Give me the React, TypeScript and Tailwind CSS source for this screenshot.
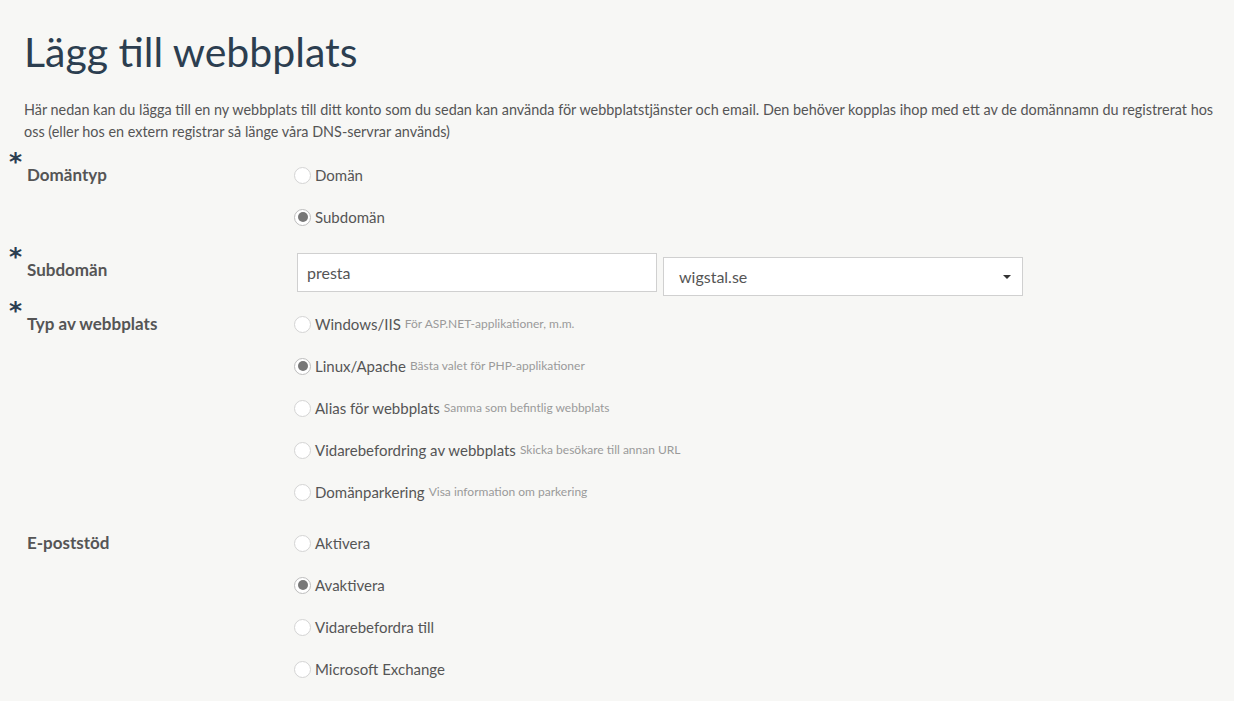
import React from "react";

const font = { fontFamily: '"Lato", "Open Sans", sans-serif' };

function Radio({ checked, label, hint }: { checked?: boolean; label: string; hint?: string }) {
  return (
    <div className="flex h-[42px] items-center">
      <span
        className={
          checked
            ? "flex h-[17px] w-[17px] shrink-0 items-center justify-center rounded-full border border-[#bdbdbd] bg-white"
            : "flex h-[17px] w-[17px] shrink-0 items-center justify-center rounded-full border border-[#d4d4d4] bg-white"
        }
      >
        {checked && <span className="h-[10px] w-[10px] rounded-full bg-[#777]" />}
      </span>
      <span className="ml-[4px] text-[15px] text-[#555]">{label}</span>
      {hint && <span className="ml-[4px] text-[12px] text-[#9a9a9a]">{hint}</span>}
    </div>
  );
}

function Label({ text, required }: { text: string; required?: boolean }) {
  return (
    <div className="relative w-[270px] shrink-0 pl-[3px]">
      {required && (
        <span
          className="absolute left-[-15px] top-[-13px] text-[25px] font-bold leading-none text-[#2c3e50]"
          style={{ fontFamily: '"DejaVu Sans", sans-serif' }}
        >
          *
        </span>
      )}
      <span className="text-[17px] font-bold text-[#555]">{text}</span>
    </div>
  );
}

export default function App() {
  return (
    <div className="min-h-[701px] bg-[#f7f7f5] pl-[24px] pr-[16px]" style={font}>
      <h1 className="pt-[24px] text-[41px] leading-[56px] text-[#2c3e50]">Lägg till webbplats</h1>
      <p className="mt-[19px] text-[14.4px] leading-[22px] text-[#555]">
        Här nedan kan du lägga till en ny webbplats till ditt konto som du sedan kan använda för webbplatstjänster och email. Den behöver kopplas ihop med ett av de domännamn du registrerat hos oss (eller hos en extern registrar så länge våra DNS-servrar används)
      </p>

      <div className="mt-[11px] flex">
        <div className="flex h-[42px] items-center">
          <Label text="Domäntyp" required />
        </div>
        <div>
          <Radio label="Domän" />
          <Radio label="Subdomän" checked />
        </div>
      </div>

      <div className="mt-[15px] flex">
        <div className="flex h-[39px] items-center pb-[6px]">
          <Label text="Subdomän" required />
        </div>
        <div className="ml-[3px] flex gap-[6px]">
          <div className="flex h-[39px] w-[360px] items-center border border-[#d0d0d0] bg-white pl-[9px] text-[16px] text-[#555]">
            presta
          </div>
          <div className="mt-[4px] flex h-[39px] w-[360px] items-center justify-between border border-[#d0d0d0] bg-white pl-[15px] pr-[11px] text-[16px] text-[#555]">
            <span>wigstal.se</span>
            <span className="h-0 w-0 border-x-[4px] border-t-[4px] border-x-transparent border-t-[#333]" />
          </div>
        </div>
      </div>

      <div className="mt-[7px] flex">
        <div className="flex h-[42px] items-center">
          <Label text="Typ av webbplats" required />
        </div>
        <div>
          <Radio label="Windows/IIS" hint="För ASP.NET-applikationer, m.m." />
          <Radio label="Linux/Apache" hint="Bästa valet för PHP-applikationer" checked />
          <Radio label="Alias för webbplats" hint="Samma som befintlig webbplats" />
          <Radio label="Vidarebefordring av webbplats" hint="Skicka besökare till annan URL" />
          <Radio label="Domänparkering" hint="Visa information om parkering" />
        </div>
      </div>

      <div className="mt-[9px] flex">
        <div className="flex h-[42px] items-center">
          <Label text="E-poststöd" />
        </div>
        <div>
          <Radio label="Aktivera" />
          <Radio label="Avaktivera" checked />
          <Radio label="Vidarebefordra till" />
          <Radio label="Microsoft Exchange" />
        </div>
      </div>
    </div>
  );
}
